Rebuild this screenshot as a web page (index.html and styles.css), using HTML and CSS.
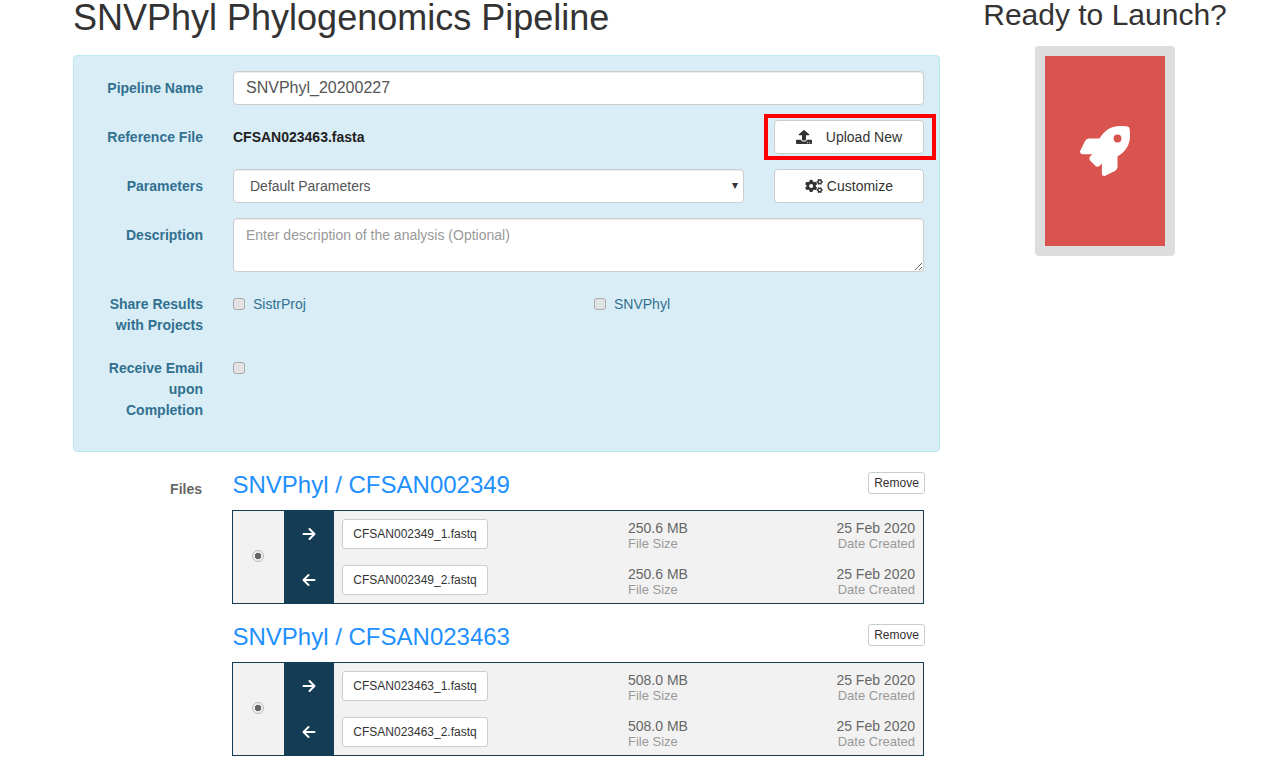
FILE: index.html
```html
<!DOCTYPE html>
<html lang="en">
<head>
    <meta charset="UTF-8">
    <title>SNVPhyl Phylogenomics Pipeline</title>
    <link rel="stylesheet" href="styles.css">
</head>
<body>
<svg class="defs" width="0" height="0">
    <symbol id="arrow-right" viewBox="0 0 14 14"><path d="M1.5 7h10.5M7.5 2l5 5-5 5" fill="none" stroke="#fff" stroke-width="2" stroke-linecap="round" stroke-linejoin="round"/></symbol>
    <symbol id="arrow-left" viewBox="0 0 14 14"><path d="M12.5 7H2M6.5 2l-5 5 5 5" fill="none" stroke="#fff" stroke-width="2" stroke-linecap="round" stroke-linejoin="round"/></symbol>
</svg>
<div class="page">
    <div class="main">
        <h1 class="title">SNVPhyl Phylogenomics Pipeline</h1>

        <form class="panel">
            <label class="field-label" for="name">Pipeline Name</label>
            <input class="control" type="text" id="name" value="SNVPhyl_20200227">

            <div class="field-label">Reference File</div>
            <div class="with-button">
                <strong class="ref-file">CFSAN023463.fasta</strong>
                <div class="highlight-wrap">
                    <button type="button" class="btn btn-upload">
                        <svg class="icon-upload" viewBox="0 0 512 512" preserveAspectRatio="none"><path fill="#333" d="M296 384h-80c-13.3 0-24-10.7-24-24V192h-87.7c-17.8 0-26.7-21.5-14.1-34.1L242.3 5.7c7.5-7.5 19.8-7.5 27.3 0l152.2 152.2c12.6 12.6 3.7 34.1-14.1 34.1H320v168c0 13.3-10.7 24-24 24zm216-8v112c0 13.3-10.7 24-24 24H24c-13.3 0-24-10.7-24-24V376c0-13.3 10.7-24 24-24h136v8c0 30.9 25.1 56 56 56h80c30.9 0 56-25.1 56-56v-8h136c13.3 0 24 10.7 24 24zm-124 88c0-11-9-20-20-20s-20 9-20 20 9 20 20 20 20-9 20-20zm64 0c0-11-9-20-20-20s-20 9-20 20 9 20 20 20 20-9 20-20z"/></svg>
                        Upload New
                    </button>
                    <div class="highlight"></div>
                </div>
            </div>

            <label class="field-label" for="params">Parameters</label>
            <div class="with-button">
                <div class="select-wrap">
                    <select class="control select" id="params">
                        <option>Default Parameters</option>
                    </select>
                </div>
                <button type="button" class="btn btn-customize">
                    <svg class="icon-cogs" viewBox="0 0 640 512"><path fill="#333" d="M512.1 191l-8.2 14.3c-3 5.3-9.4 7.5-15.1 5.4-11.8-4.4-22.6-10.7-32.1-18.6-4.6-3.8-5.8-10.5-2.8-15.7l8.2-14.3c-6.9-8-12.3-17.3-15.9-27.4h-16.5c-6 0-11.2-4.3-12.2-10.3-2-12-2.1-24.6 0-37.1 1-6 6.2-10.4 12.2-10.4h16.5c3.6-10.1 9-19.4 15.9-27.4l-8.2-14.3c-3-5.2-1.9-11.9 2.8-15.7 9.5-7.9 20.4-14.2 32.1-18.6 5.7-2.1 12.1.1 15.1 5.4l8.2 14.3c10.5-1.9 21.2-1.9 31.7 0L552 6.3c3-5.3 9.4-7.5 15.1-5.4 11.8 4.4 22.6 10.7 32.1 18.6 4.6 3.8 5.8 10.5 2.8 15.7l-8.2 14.3c6.9 8 12.3 17.3 15.9 27.4h16.5c6 0 11.2 4.3 12.2 10.3 2 12 2.1 24.6 0 37.1-1 6-6.2 10.4-12.2 10.4h-16.5c-3.6 10.1-9 19.4-15.9 27.4l8.2 14.3c3 5.2 1.9 11.9-2.8 15.7-9.5 7.9-20.4 14.2-32.1 18.6-5.7 2.1-12.1-.1-15.1-5.4l-8.2-14.3c-10.4 1.9-21.2 1.9-31.7 0zm-10.5-58.8c38.5 29.6 82.4-14.3 52.8-52.8-38.5-29.7-82.4 14.3-52.8 52.8zM386.3 286.1l33.7 16.8c10.1 5.8 14.5 18.1 10.5 29.1-8.9 24.2-26.4 46.4-42.6 65.8-7.4 8.9-20.2 11.1-30.3 5.3l-29.1-16.8c-16 13.7-34.6 24.6-54.9 31.7v33.6c0 11.6-8.3 21.6-19.7 23.6-24.6 4.2-50.4 4.4-75.9 0-11.5-2-20-11.9-20-23.6V418c-20.3-7.2-38.9-18-54.9-31.7L74 403c-10 5.8-22.9 3.6-30.3-5.3-16.2-19.4-33.3-41.6-42.2-65.7-4-10.9.4-23.2 10.5-29.1l33.3-16.8c-3.9-20.9-3.9-42.4 0-63.4L12 205.8c-10.1-5.8-14.6-18.1-10.5-29 8.9-24.2 26-46.4 42.2-65.8 7.4-8.9 20.2-11.1 30.3-5.3l29.1 16.8c16-13.7 34.6-24.6 54.9-31.7V57.1c0-11.5 8.2-21.5 19.6-23.5 24.6-4.2 50.5-4.4 76-.1 11.5 2 20 11.9 20 23.6v33.6c20.3 7.2 38.9 18 54.9 31.7l29.1-16.8c10-5.8 22.9-3.6 30.3 5.3 16.2 19.4 33.2 41.6 42.1 65.8 4 10.9.1 23.2-10 29.1l-33.7 16.8c3.9 21 3.9 42.5 0 63.5zm-117.6 21.1c59.2-77-28.7-164.9-105.7-105.7-59.2 77 28.7 164.9 105.7 105.7zm243.4 182.7l-8.2 14.3c-3 5.3-9.4 7.5-15.1 5.4-11.8-4.4-22.6-10.7-32.1-18.6-4.6-3.8-5.8-10.5-2.8-15.7l8.2-14.3c-6.9-8-12.3-17.3-15.9-27.4h-16.5c-6 0-11.2-4.3-12.2-10.3-2-12-2.1-24.6 0-37.1 1-6 6.2-10.4 12.2-10.4h16.5c3.6-10.1 9-19.4 15.9-27.4l-8.2-14.3c-3-5.2-1.9-11.9 2.8-15.7 9.5-7.9 20.4-14.2 32.1-18.6 5.7-2.1 12.1.1 15.1 5.4l8.2 14.3c10.5-1.9 21.2-1.9 31.7 0l8.2-14.3c3-5.3 9.4-7.5 15.1-5.4 11.8 4.4 22.6 10.7 32.1 18.6 4.6 3.8 5.8 10.5 2.8 15.7l-8.2 14.3c6.9 8 12.3 17.3 15.9 27.4h16.5c6 0 11.2 4.3 12.2 10.3 2 12 2.1 24.6 0 37.1-1 6-6.2 10.4-12.2 10.4h-16.5c-3.6 10.1-9 19.4-15.9 27.4l8.2 14.3c3 5.2 1.9 11.9-2.8 15.7-9.5 7.9-20.4 14.2-32.1 18.6-5.7 2.1-12.1-.1-15.1-5.4l-8.2-14.3c-10.4 1.9-21.2 1.9-31.7 0zM501.6 431c38.5 29.6 82.4-14.3 52.8-52.8-38.5-29.6-82.4 14.3-52.8 52.8z"/></svg>
                    Customize
                </button>
            </div>

            <label class="field-label" for="desc">Description</label>
            <textarea class="control textarea" id="desc" placeholder="Enter description of the analysis (Optional)"></textarea>

            <div class="field-label">Share Results<br>with Projects</div>
            <div class="projects">
                <label class="check"><input type="checkbox"> SistrProj</label>
                <label class="check"><input type="checkbox"> SNVPhyl</label>
            </div>

            <div class="field-label">Receive Email<br>upon<br>Completion</div>
            <div class="projects">
                <label class="check"><input type="checkbox"></label>
            </div>
        </form>

        <div class="files">
            <div class="files-label">Files</div>
            <div class="samples">
                <div class="sample">
                    <div class="sample-head">
                        <h2 class="sample-name">SNVPhyl / CFSAN002349</h2>
                        <button type="button" class="btn-xs">Remove</button>
                    </div>
                    <div class="pair">
                        <div class="pair-radio"><input type="radio" checked></div>
                        <div class="pair-rows">
                            <div class="file-row">
                                <div class="dir"><svg class="arrow"><use href="#arrow-right"/></svg></div>
                                <div class="file-name"><button type="button" class="btn-file">CFSAN002349_1.fastq</button></div>
                                <div class="meta"><div class="meta-value">250.6 MB</div><div class="meta-key">File Size</div></div>
                                <div class="meta date"><div class="meta-value">25 Feb 2020</div><div class="meta-key">Date Created</div></div>
                            </div>
                            <div class="file-row">
                                <div class="dir"><svg class="arrow"><use href="#arrow-left"/></svg></div>
                                <div class="file-name"><button type="button" class="btn-file">CFSAN002349_2.fastq</button></div>
                                <div class="meta"><div class="meta-value">250.6 MB</div><div class="meta-key">File Size</div></div>
                                <div class="meta date"><div class="meta-value">25 Feb 2020</div><div class="meta-key">Date Created</div></div>
                            </div>
                        </div>
                    </div>
                </div>

                <div class="sample">
                    <div class="sample-head">
                        <h2 class="sample-name">SNVPhyl / CFSAN023463</h2>
                        <button type="button" class="btn-xs">Remove</button>
                    </div>
                    <div class="pair">
                        <div class="pair-radio"><input type="radio" checked></div>
                        <div class="pair-rows">
                            <div class="file-row">
                                <div class="dir"><svg class="arrow"><use href="#arrow-right"/></svg></div>
                                <div class="file-name"><button type="button" class="btn-file">CFSAN023463_1.fastq</button></div>
                                <div class="meta"><div class="meta-value">508.0 MB</div><div class="meta-key">File Size</div></div>
                                <div class="meta date"><div class="meta-value">25 Feb 2020</div><div class="meta-key">Date Created</div></div>
                            </div>
                            <div class="file-row">
                                <div class="dir"><svg class="arrow"><use href="#arrow-left"/></svg></div>
                                <div class="file-name"><button type="button" class="btn-file">CFSAN023463_2.fastq</button></div>
                                <div class="meta"><div class="meta-value">508.0 MB</div><div class="meta-key">File Size</div></div>
                                <div class="meta date"><div class="meta-value">25 Feb 2020</div><div class="meta-key">Date Created</div></div>
                            </div>
                        </div>
                    </div>
                </div>
            </div>
        </div>
    </div>

    <div class="side">
        <h3 class="launch-title">Ready to Launch?</h3>
        <div class="launch-card">
            <div class="launch-btn">
                <svg class="icon-rocket" viewBox="0 0 512 512"><path fill="#fff" d="M505.12019,19.09375c-1.18945-5.53125-6.65819-11-12.207-12.1875C460.716,0,435.507,0,410.40747,0,307.17523,0,245.26909,55.20312,199.05238,128H94.83772c-16.34763.01562-35.55658,11.875-42.88664,26.48438L2.51562,253.29688A28.4,28.4,0,0,0,0,264a24.00867,24.00867,0,0,0,24.00582,24H127.81618l-22.47457,22.46875c-11.36521,11.36133-12.99607,32.25781,0,45.25L156.24582,406.625c11.15623,11.1875,32.15619,13.15625,45.27726,0l22.47457-22.46875V488a24.00867,24.00867,0,0,0,24.00581,24,28.55934,28.55934,0,0,0,10.707-2.51562l98.72834-49.39063c14.62888-7.29687,26.50776-26.5,26.50776-42.85937V312.79688c72.59753-46.3125,128.03493-108.40626,128.03493-211.09376C512.07526,76.5,512.07526,51.29688,505.12019,19.09375ZM384.04033,168A40,40,0,1,1,424.05,128,40.02322,40.02322,0,0,1,384.04033,168Z"/></svg>
            </div>
        </div>
    </div>
</div>
</body>
</html>
```

FILE: styles.css
```css
* {
    box-sizing: border-box;
}

html, body {
    height: 100%;
    overflow: hidden;
}

body {
    margin: 0;
    background-color: #fff;
    color: #333;
    font-family: "Liberation Sans", Arial, sans-serif;
    font-size: 14px;
    line-height: 21px;
}

.defs {
    display: block;
    height: 0;
}

.page {
    display: flex;
    gap: 15px;
    padding-left: 73px;
}

.main {
    width: 867px;
}

.title {
    margin: 0 0 19px;
    font-size: 36px;
    font-weight: 400;
    line-height: 36px;
    color: #333;
}

/* form panel */
.panel {
    display: grid;
    grid-template-columns: 129px 691px;
    column-gap: 30px;
    row-gap: 15px;
    padding: 15px 15px 30px 0;
    background-color: #d9edf7;
    border: 1px solid #bce8f1;
    border-radius: 4px;
}

.field-label {
    padding-top: 7px;
    text-align: right;
    font-weight: 700;
    color: #31708f;
}

.control {
    display: block;
    width: 100%;
    height: 34px;
    padding: 6px 12px;
    font-family: inherit;
    font-size: 16px;
    color: #555;
    background-color: #fff;
    border: 1px solid #ccc;
    border-radius: 4px;
    box-shadow: inset 0 1px 1px rgba(0, 0, 0, 0.075);
}

.textarea {
    height: 54px;
    font-size: 14px;
    line-height: 20px;
}

.textarea::placeholder {
    color: #999;
}

.with-button {
    display: flex;
    align-items: center;
    justify-content: space-between;
    height: 34px;
}

.ref-file {
    color: #222;
}

.select-wrap {
    position: relative;
    width: 511px;
}

.select-wrap::after {
    content: "\25BE";
    position: absolute;
    top: 6px;
    right: 6px;
    font-size: 12px;
    color: #333;
    pointer-events: none;
}

.select {
    padding-left: 16px;
    font-size: 14px;
    appearance: none;
}

.btn {
    width: 150px;
    height: 34px;
    padding: 0;
    font-family: inherit;
    font-size: 14px;
    color: #333;
    background-color: #fff;
    border: 1px solid #ccc;
    border-radius: 4px;
}

.icon-upload {
    width: 16px;
    height: 14px;
    margin-right: 10px;
    vertical-align: -2px;
}

.icon-cogs {
    width: 18px;
    height: 14px;
    vertical-align: -2px;
}

.highlight-wrap {
    position: relative;
    height: 34px;
}

.highlight {
    position: absolute;
    top: -6px;
    right: -12px;
    bottom: -6px;
    left: -10px;
    border: 4px solid #f00;
    pointer-events: none;
}

.projects {
    display: grid;
    grid-template-columns: 361px 1fr;
    align-items: start;
    padding-top: 7px;
}

.check {
    display: flex;
    align-items: center;
    gap: 8px;
    height: 21px;
    color: #31708f;
}

input[type="checkbox"] {
    appearance: none;
    width: 12px;
    height: 12px;
    margin: 0 0 1px;
    background-color: #e2e2e2;
    border: 1px solid #aaa;
    border-radius: 3px;
}

/* files */
.files {
    display: grid;
    grid-template-columns: 129px 693px;
    column-gap: 30px;
    margin-top: 20px;
}

.files-label {
    padding-top: 7px;
    text-align: right;
    font-weight: 700;
    color: #666;
}

.samples {
    display: flex;
    flex-direction: column;
    gap: 20px;
}

.sample-head {
    display: flex;
    justify-content: space-between;
    align-items: flex-start;
    margin-bottom: 12px;
}

.sample-name {
    margin: 0;
    padding-left: 0.5px;
    font-size: 24px;
    font-weight: 400;
    line-height: 26px;
    color: #1e90ff;
}

.btn-xs {
    height: 22px;
    width: 57px;
    padding: 0;
    font-family: inherit;
    font-size: 12px;
    color: #333;
    background-color: #fff;
    border: 1px solid #ccc;
    border-radius: 3px;
}

.pair {
    display: flex;
    width: 692px;
    height: 94px;
    background-color: #f2f2f2;
    border: 1px solid #143c54;
}

.pair-radio {
    display: flex;
    align-items: center;
    justify-content: center;
    width: 51px;
}

input[type="radio"] {
    appearance: none;
    width: 12px;
    height: 12px;
    margin: 0 1px 2px 0;
    background: radial-gradient(circle, #666 0 3px, #eee 3.5px);
    border: 1px solid #bbb;
    border-radius: 50%;
}

.pair-rows {
    flex: 1;
}

.file-row {
    display: flex;
    align-items: center;
    height: 46px;
}

.dir {
    display: flex;
    align-items: center;
    justify-content: center;
    width: 50px;
    height: 46px;
    background-color: #143c54;
}

.arrow {
    width: 14px;
    height: 14px;
}

.file-name {
    width: 294px;
    padding-left: 8px;
}

.btn-file {
    width: 146px;
    height: 30px;
    padding: 0;
    font-family: inherit;
    font-size: 12px;
    color: #333;
    background-color: #fff;
    border: 1px solid #ccc;
    border-radius: 3px;
}

.meta {
    padding-top: 4px;
    line-height: 15px;
}

.date {
    margin-left: auto;
    padding-right: 8px;
    text-align: right;
}

.meta-value {
    color: #666;
}

.meta-key {
    font-size: 13px;
    color: #999;
}

/* launch card */
.side {
    display: flex;
    flex-direction: column;
    align-items: center;
    width: 300px;
}

.launch-title {
    margin: 0 0 16px;
    font-size: 30px;
    font-weight: 400;
    line-height: 30px;
    color: #333;
}

.launch-card {
    width: 140px;
    height: 210px;
    padding: 10px;
    background-color: #ddd;
    border-radius: 4px;
}

.launch-btn {
    display: flex;
    align-items: center;
    justify-content: center;
    height: 190px;
    background-color: #d9534f;
}

.icon-rocket {
    width: 50px;
    height: 50px;
}
```
